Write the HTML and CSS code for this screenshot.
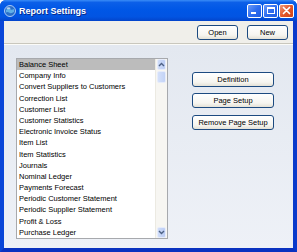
FILE: index.html
```html
<!DOCTYPE html>
<html lang="en">

<head>
	<meta charset="UTF-8">
	<meta name="viewport" content="width=device-width, initial-scale=1.0">
	<title>Report Settings</title>
	<link rel="stylesheet" href="styles.css">
</head>

<body>
	<div class="window">
		<!--title bar-->
		<div class="titlebar">
			<svg class="titlebar__icon" width="12" height="12" viewBox="0 0 12 12">
				<circle cx="6" cy="6" r="5.5" fill="#2a6fc9" stroke="#cfe3ff" stroke-width="0.8"/>
				<path d="M2 5 Q4 2.5 6 4 Q7.5 5.5 10 4 L10 7 Q7 9 5 7.5 Q3.5 6.5 2 7.5 Z" fill="#5fb0e8"/>
				<ellipse cx="4.5" cy="3.2" rx="2" ry="1" fill="#e8f4ff" opacity="0.7"/>
			</svg>
			<div class="titlebar__title">Report Settings</div>
			<div class="titlebar__controls">
				<div class="ctrl ctrl--min"><span></span></div>
				<div class="ctrl ctrl--max"><span></span></div>
				<div class="ctrl ctrl--close">
					<svg width="9" height="9" viewBox="0 0 9 9">
						<path d="M1.5 1.5 L7.5 7.5 M7.5 1.5 L1.5 7.5" stroke="#fff" stroke-width="1.7" stroke-linecap="round"/>
					</svg>
				</div>
			</div>
		</div>
		<div class="frame">
			<!--toolbar-->
			<div class="toolbar">
				<button class="btn btn--top">Open</button>
				<button class="btn btn--top">New</button>
			</div>
			<!--content-->
			<div class="content">
				<div class="list">
					<div class="list__items">
						<div class="list__item selected">Balance Sheet</div>
						<div class="list__item">Company Info</div>
						<div class="list__item">Convert Suppliers to Customers</div>
						<div class="list__item">Correction List</div>
						<div class="list__item">Customer List</div>
						<div class="list__item">Customer Statistics</div>
						<div class="list__item">Electronic Invoice Status</div>
						<div class="list__item">Item List</div>
						<div class="list__item">Item Statistics</div>
						<div class="list__item">Journals</div>
						<div class="list__item">Nominal Ledger</div>
						<div class="list__item">Payments Forecast</div>
						<div class="list__item">Periodic Customer Statement</div>
						<div class="list__item">Periodic Supplier Statement</div>
						<div class="list__item">Profit &amp; Loss</div>
						<div class="list__item">Purchase Ledger</div>
					</div>
					<div class="scrollbar">
						<div class="scrollbar__btn">
							<svg width="7" height="5" viewBox="0 0 7 5"><path d="M1 4 L3.5 1.5 L6 4" fill="none" stroke="#4d6185" stroke-width="1.4"/></svg>
						</div>
						<div class="scrollbar__thumb"></div>
						<div class="scrollbar__track"></div>
						<div class="scrollbar__btn">
							<svg width="7" height="5" viewBox="0 0 7 5"><path d="M1 1 L3.5 3.5 L6 1" fill="none" stroke="#4d6185" stroke-width="1.4"/></svg>
						</div>
					</div>
				</div>
				<div class="side">
					<button class="btn btn--side">Definition</button>
					<button class="btn btn--side">Page Setup</button>
					<button class="btn btn--side">Remove Page Setup</button>
				</div>
			</div>
		</div>
	</div>
</body>

</html>
```

FILE: styles.css
```css
* {
	margin: 0;
	padding: 0;
	box-sizing: border-box;
}

body {
	font-family: "Liberation Sans", Arial, sans-serif;
	font-size: 7.5px;
	color: #000;
	background: #fff;
}

.window {
	width: 297px;
	height: 252px;
	display: flex;
	flex-direction: column;
	background: #0841d4;
	border-radius: 6px 6px 0 0;
	overflow: hidden;
}

/* title bar */
.titlebar {
	height: 21px;
	display: flex;
	align-items: center;
	padding: 0 3px 0 4px;
	background: linear-gradient(#3a8cf7 0%, #0b5fe8 12%, #0057e6 45%, #0254e2 80%, #0344cb 100%);
}

.titlebar__icon {
	flex: none;
}

.titlebar__title {
	margin-left: 3px;
	color: #fff;
	font-weight: bold;
	font-size: 9px;
	text-shadow: 1px 1px 0 #0a2a8a;
	flex: 1;
}

.titlebar__controls {
	display: flex;
	gap: 1px;
}

.ctrl {
	width: 15px;
	height: 14px;
	border: 1px solid #fff;
	border-radius: 2px;
	background: linear-gradient(135deg, #6d9bf7 0%, #2f6ef0 50%, #1f5ae0 100%);
	position: relative;
	display: flex;
	align-items: center;
	justify-content: center;
}

.ctrl--min span {
	position: absolute;
	left: 3px;
	bottom: 3px;
	width: 5px;
	height: 2px;
	background: #fff;
}

.ctrl--max span {
	width: 8px;
	height: 7px;
	border: 1px solid #fff;
	border-top-width: 2px;
}

.ctrl--close {
	background: linear-gradient(135deg, #f09b7c 0%, #e2572c 50%, #cc4416 100%);
}

/* frame */
.frame {
	flex: 1;
	display: flex;
	flex-direction: column;
	border-left: 4px solid #0a46d8;
	border-right: 4px solid #0a3acb;
	border-bottom: 4px solid #0a32c0;
}

.toolbar {
	height: 23px;
	display: flex;
	justify-content: flex-end;
	align-items: flex-start;
	gap: 9px;
	padding: 4px 5px 0 0;
	background: #f0efea;
	border-bottom: 1px solid #c9c7bd;
}

.btn {
	font-family: "Liberation Sans", Arial, sans-serif;
	font-size: 7.5px;
	color: #000;
	height: 15px;
	border: 1px solid #1c4a80;
	border-radius: 3px;
	background: linear-gradient(#ffffff 0%, #f6f5f0 70%, #e4e1d6 100%);
	display: flex;
	align-items: center;
	justify-content: center;
}

.btn--top {
	width: 41px;
}

.content {
	flex: 1;
	display: flex;
	align-items: flex-start;
	padding: 13px 0 0 12px;
	background: linear-gradient(#e3e8f0 0%, #eef1f7 100%);
	border-top: 1px solid #fbfbf8;
}

/* list */
.list {
	width: 152px;
	display: flex;
	border: 1px solid #a7a9ad;
	background: #fff;
}

.list__items {
	flex: 1;
}

.list__item {
	height: 11.2px;
	line-height: 11.2px;
	padding-left: 2px;
	white-space: nowrap;
}

.list__item.selected {
	background: #bcbcbc;
}

.scrollbar {
	width: 12px;
	display: flex;
	flex-direction: column;
	background: #f7f6f2;
	border-left: 1px solid #eceae2;
}

.scrollbar__btn {
	height: 11px;
	margin: 0 1px;
	border-radius: 2px;
	background: linear-gradient(90deg, #cfdcf8, #bccdf5);
	border: 1px solid #e6ecfb;
	display: flex;
	align-items: center;
	justify-content: center;
}

.scrollbar__thumb {
	height: 12px;
	margin: 1px 1px 0;
	border-radius: 2px;
	background: linear-gradient(90deg, #d4e0fa, #c3d3f6);
	border: 1px solid #e6ecfb;
}

.scrollbar__track {
	flex: 1;
}

/* side buttons */
.side {
	display: flex;
	flex-direction: column;
	gap: 6.3px;
	margin: 14px 0 0 24px;
}

.btn--side {
	width: 82px;
}
```
